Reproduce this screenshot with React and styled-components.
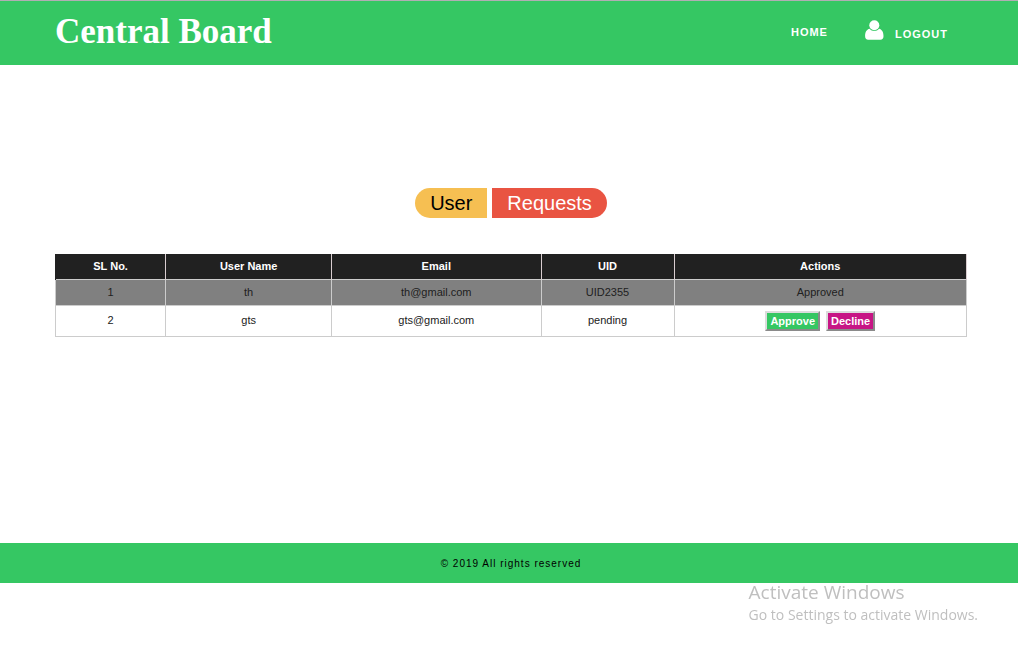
import React from "react";
import styled, { createGlobalStyle } from "styled-components";

const GlobalStyle = createGlobalStyle`
  *, *::before, *::after { box-sizing: border-box; }
  body {
    margin: 0;
    background: #fff;
    color: #212121;
    font-family: "Liberation Sans", Arial, sans-serif;
    font-size: 11px;
  }
`;

const Header = styled.header`
  display: flex;
  align-items: flex-start;
  justify-content: space-between;
  min-height: 65px;
  padding: 0 70px 0 55px;
  border-top: 1px solid #b1aeb3;
  background: #35c763;
`;

const Brand = styled.h1`
  margin: 0;
  padding-top: 11px;
  color: #fff;
  font: bold 35px/40px "Liberation Serif", "Times New Roman", serif;
`;

const Nav = styled.nav`
  display: flex;
  align-items: flex-start;
  gap: 37px;
  padding-top: 18px;
`;

const NavLink = styled.a`
  display: flex;
  align-items: flex-start;
  gap: 11px;
  color: #fff;
  font-size: 11px;
  font-weight: bold;
  line-height: 26px;
  letter-spacing: 1px;
  text-decoration: none;
`;

const LogoutLabel = styled.span`
  padding-top: 2px;
`;

const UserGlyph = styled.svg`
  width: 19px;
  height: 20px;
  margin-top: 1px;
  fill: #fff;
`;

const Main = styled.main`
  min-height: 478px;
  padding: 123px 51px 40px 55px;
`;

const Tabs = styled.div`
  display: flex;
  justify-content: center;
  gap: 5px;
  margin-bottom: 36px;
`;

const Tab = styled.button`
  height: 30px;
  padding: 0 15px;
  border: 0;
  border-radius: ${(p) => (p.$end ? "0 15px 15px 0" : "15px 0 0 15px")};
  background: ${(p) => (p.$end ? "#e95442" : "#f6bf52")};
  color: ${(p) => (p.$end ? "#fff" : "#000")};
  font: 20px/30px "Liberation Sans", Arial, sans-serif;
  cursor: pointer;
`;

const Table = styled.table`
  width: 100%;
  table-layout: fixed;
  border-collapse: collapse;
  text-align: center;
  line-height: 15px;
`;

const Col = styled.col`
  width: ${(p) => p.$share}%;
`;

const HeadCell = styled.th`
  height: 25px;
  padding: 0;
  border-right: 1px solid #d9cdd0;
  background: #212121;
  color: #fff;

  &:first-child {
    border-left: 1px solid #212121;
  }
`;

const Row = styled.tr`
  height: ${(p) => (p.$done ? 26 : 31)}px;
  background: ${(p) => (p.$done ? "#808080" : "#fff")};
`;

const Cell = styled.td`
  padding: 0;
  border: 1px solid #ccc;
`;

const Actions = styled.div`
  display: flex;
  justify-content: center;
  gap: 6px;
`;

const ActionButton = styled.button`
  height: 20px;
  padding: 0 3px;
  border: 2px solid;
  border-color: #dcdcdc #8a8a8a #8a8a8a #dcdcdc;
  background: ${(p) => (p.$decline ? "#c71585" : "#35c763")};
  color: #fff;
  font: bold 11px/16px "Liberation Sans", Arial, sans-serif;
  cursor: pointer;
`;

const Footer = styled.footer`
  padding: 2px 51px 0 55px;
  background: #35c763;
  color: #000;
  font-size: 10px;
  line-height: 38px;
  letter-spacing: 1px;
  text-align: center;
`;

const Watermark = styled.aside`
  position: fixed;
  right: 40px;
  bottom: 33px;
  color: #bfbfbf;
  font: 14px/20px "Open Sans", sans-serif;
  pointer-events: none;
`;

const WatermarkTitle = styled.div`
  font-size: 19px;
  line-height: 25px;
`;

const columns = [
  ["SL No.", 12.1],
  ["User Name", 18.2],
  ["Email", 23],
  ["UID", 14.6],
  ["Actions", 32.1],
];

const users = [
  { id: 1, name: "th", email: "th@gmail.com", uid: "UID2355" },
  { id: 2, name: "gts", email: "gts@gmail.com", uid: null },
];

export default function App() {
  return (
    <>
      <GlobalStyle />
      <Header>
        <Brand>Central Board</Brand>
        <Nav>
          <NavLink href="#home">HOME</NavLink>
          <NavLink href="#logout">
            <UserGlyph viewBox="0 0 19 20" aria-hidden="true">
              <circle cx="9.3" cy="5.2" r="5" />
              <path d="M4.6 8.7C1.4 9.3 0.1 12.4 0.1 16.2C0.1 18.3 1.2 19.8 3.2 19.8H15.4C17.4 19.8 18.5 18.3 18.5 16.2C18.5 12.4 17.2 9.3 14 8.7C12.8 10.2 11.2 10.9 9.3 10.9C7.4 10.9 5.8 10.2 4.6 8.7Z" />
            </UserGlyph>
            <LogoutLabel>LOGOUT</LogoutLabel>
          </NavLink>
        </Nav>
      </Header>
      <Main>
        <Tabs>
          <Tab type="button">User</Tab>
          <Tab type="button" $end>Requests</Tab>
        </Tabs>
        <Table>
          <colgroup>
            {columns.map(([label, share]) => (
              <Col key={label} $share={share} />
            ))}
          </colgroup>
          <thead>
            <tr>
              {columns.map(([label]) => (
                <HeadCell key={label} scope="col">{label}</HeadCell>
              ))}
            </tr>
          </thead>
          <tbody>
            {users.map((u) => (
              <Row key={u.id} $done={Boolean(u.uid)}>
                <Cell>{u.id}</Cell>
                <Cell>{u.name}</Cell>
                <Cell>{u.email}</Cell>
                <Cell>{u.uid || "pending"}</Cell>
                <Cell>
                  {u.uid ? (
                    "Approved"
                  ) : (
                    <Actions>
                      <ActionButton type="button">Approve</ActionButton>
                      <ActionButton type="button" $decline>Decline</ActionButton>
                    </Actions>
                  )}
                </Cell>
              </Row>
            ))}
          </tbody>
        </Table>
      </Main>
      <Footer>© 2019 All rights reserved</Footer>
      <Watermark>
        <WatermarkTitle>Activate Windows</WatermarkTitle>
        Go to Settings to activate Windows.
      </Watermark>
    </>
  );
}
